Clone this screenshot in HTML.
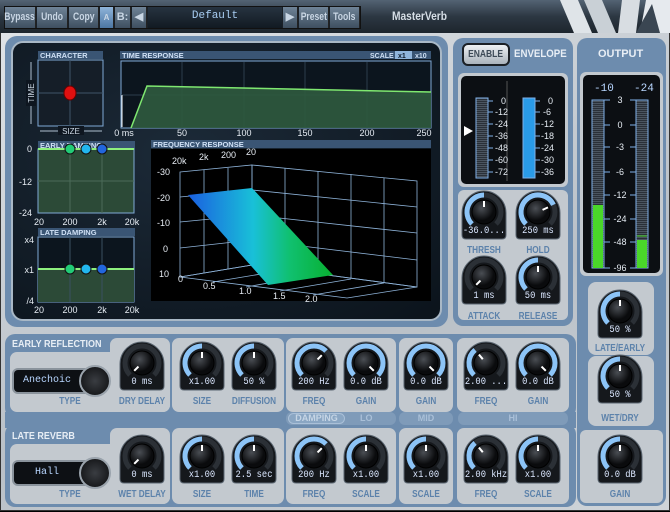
<!DOCTYPE html><html><head><meta charset="utf-8"><style>
*{margin:0;padding:0;box-sizing:border-box}
body{width:670px;height:512px;overflow:hidden;background:#000;font-family:"Liberation Sans",sans-serif;position:relative}
.a{position:absolute}
.lbl{position:absolute;font:bold 10px "Liberation Sans",sans-serif;color:#5c82ab;text-align:center;transform:translateX(-50%) scaleX(0.82);white-space:nowrap;letter-spacing:0}
.val{position:absolute;font:10px "Liberation Mono",monospace;color:#dbe7ff;text-align:center;transform:translateX(-50%) scaleX(0.88);white-space:nowrap}
.tb{position:absolute;top:7px;height:21px;background:linear-gradient(#6f8397,#3e4f60);color:#c9d6e4;font:bold 11px "Liberation Sans",sans-serif;line-height:21px;text-align:center;border-right:1px solid #222;white-space:nowrap}
.tb span{display:inline-block;transform:scaleX(0.78);margin:0 -6px}
</style></head><body>
<div class="a" style="left:0;top:32px;width:670px;height:479px;background:linear-gradient(160deg,#dfe3e7,#b9c0c7 60%,#cfd4d9);border:1px solid #333"></div>
<div class="a" style="left:0;top:0;width:670px;height:33px;background:linear-gradient(#536373,#2c3742 50%,#1d252d)"></div>
<div class="a" style="left:4px;top:6px;width:357px;height:23px;background:#1a2027;border:1px solid #111"></div>
<div class="tb" style="left:5px;width:31px"><span>Bypass</span></div>
<div class="tb" style="left:37px;width:31px"><span>Undo</span></div>
<div class="tb" style="left:69px;width:30px"><span>Copy</span></div>
<div class="tb" style="left:100px;width:14px;background:linear-gradient(#8fb4da,#4c76a2);font-size:8px">A</div>
<div class="tb" style="left:115px;width:16px">B:</div>
<div class="tb" style="left:132px;width:15px">◀</div>
<div class="a" style="left:148px;top:7px;width:134px;height:21px;background:linear-gradient(#273340,#121a22);color:#a8cdf2;font:11px 'Liberation Mono',monospace;text-align:center;line-height:19px">Default</div>
<div class="tb" style="left:283px;width:15px">▶</div>
<div class="tb" style="left:299px;width:30px"><span>Preset</span></div>
<div class="tb" style="left:330px;width:30px"><span>Tools</span></div>
<div class="a" style="left:392px;top:9px;color:#d6dee6;font:bold 12px 'Liberation Sans',sans-serif;transform:scaleX(0.85);transform-origin:left">MasterVerb</div>
<svg class="a" style="left:540px;top:0" width="130" height="33"><polygon points="20,0 38,0 52,33 34,33" fill="#dfe4e8"/><polygon points="44,0 62,0 76,33 58,33" fill="#c9d0d6"/><polygon points="82,0 100,0 96,33 78,33" fill="#d8dde2"/><polygon points="106,0 130,0 130,33 100,33" fill="#e6eaee"/><polygon points="96,33 112,4 120,33" fill="#3a4652"/></svg>

<div class="a" style="left:5px;top:36px;width:443px;height:291px;background:#6d8cae;border-radius:12px"></div>
<div class="a" style="left:11px;top:41px;width:431px;height:280px;background:radial-gradient(ellipse at 40% 40%,#1c2a38,#0b131b);border:2px solid #a9b8c6;border-radius:12px"></div>

<svg class="a" style="left:0;top:0" width="450" height="330" font-family="Liberation Sans,sans-serif">
<rect x="38" y="51" width="65" height="8" fill="#3a5574"/><text x="40" y="58" font-size="7.5" font-weight="bold" fill="#cfe0f5">CHARACTER</text>
<rect x="38" y="60" width="65" height="66" fill="#151e28" stroke="#7fa9d6"/>
<line x1="70" y1="60" x2="70" y2="126" stroke="#3e5468"/><line x1="38" y1="93" x2="103" y2="93" stroke="#3e5468"/>
<ellipse cx="70" cy="93" rx="6" ry="7" fill="#e01010" stroke="#600" />
<line x1="31" y1="62" x2="31" y2="124" stroke="#aebfd0"/><rect x="26" y="80" width="10" height="26" fill="#0e1620"/><text x="34" y="93" font-size="8" fill="#cdd9e5" transform="rotate(-90 34 93)" text-anchor="middle">TIME</text>
<line x1="40" y1="131" x2="102" y2="131" stroke="#aebfd0"/><rect x="58" y="126" width="26" height="9" fill="#0e1620"/><text x="71" y="134" font-size="8" fill="#cdd9e5" text-anchor="middle">SIZE</text>
<rect x="120" y="51" width="311" height="8" fill="#3a5574"/><text x="122" y="58" font-size="7.5" font-weight="bold" fill="#cfe0f5">TIME RESPONSE</text>
<text x="370" y="58" font-size="7" font-weight="bold" fill="#cfe0f5">SCALE</text><rect x="395" y="51" width="17" height="8" fill="#8fb4da"/><text x="398" y="58" font-size="7" font-weight="bold" fill="#0d1a2a">x1</text><text x="415" y="58" font-size="7" font-weight="bold" fill="#cfe0f5">x10</text>
<rect x="121" y="61" width="310" height="67" fill="#0c151e" stroke="#7fa9d6"/>
<g stroke="#2d3d4c"><line x1="182" y1="62" x2="182" y2="128"/><line x1="244" y1="62" x2="244" y2="128"/><line x1="305" y1="62" x2="305" y2="128"/><line x1="367" y1="62" x2="367" y2="128"/><line x1="121" y1="95" x2="431" y2="95"/></g>
<polygon points="131,128 147,86 431,92 431,128" fill="#2f5a3e" opacity="0.9"/>
<polyline points="131,128 147,86 431,92" fill="none" stroke="#7fe870" stroke-width="1.5"/>
<line x1="122" y1="95" x2="122" y2="127" stroke="#fff"/>
<g font-size="9" fill="#e6ecf3" text-anchor="middle"><text x="124" y="136">0 ms</text><text x="182" y="136">50</text><text x="244" y="136">100</text><text x="305" y="136">150</text><text x="367" y="136">200</text><text x="424" y="136">250</text></g>
<rect x="38" y="141" width="97" height="8" fill="#3a5574"/><text x="40" y="148" font-size="7.5" font-weight="bold" fill="#cfe0f5">EARLY DAMPING</text>
<rect x="38" y="149" width="96" height="64" fill="#2c4a37" stroke="#7fa9d6"/>
<g stroke="#4b6b58"><line x1="70" y1="149" x2="70" y2="213"/><line x1="102" y1="149" x2="102" y2="213"/><line x1="38" y1="181" x2="134" y2="181"/></g>
<line x1="38" y1="149" x2="134" y2="149" stroke="#8ef07e" stroke-width="2"/>
<circle cx="70" cy="149" r="5" fill="#22cc77" stroke="#111"/><circle cx="86" cy="149" r="5" fill="#22b6ee" stroke="#111"/><circle cx="102" cy="149" r="5" fill="#2266dd" stroke="#111"/>
<g font-size="9" fill="#e6ecf3" text-anchor="end"><text x="32" y="152">0</text><text x="32" y="185">-12</text><text x="32" y="216">-24</text></g>
<g font-size="9" fill="#e6ecf3" text-anchor="middle"><text x="39" y="225">20</text><text x="70" y="225">200</text><text x="102" y="225">2k</text><text x="132" y="225">20k</text></g>
<rect x="38" y="228" width="97" height="8" fill="#3a5574"/><text x="40" y="235" font-size="7.5" font-weight="bold" fill="#cfe0f5">LATE DAMPING</text>
<rect x="38" y="237" width="96" height="65" fill="#0c151e" stroke="#7fa9d6"/>
<rect x="38" y="269" width="96" height="33" fill="#2c4a37"/>
<g stroke="#3a5060"><line x1="70" y1="237" x2="70" y2="302"/><line x1="102" y1="237" x2="102" y2="302"/></g>
<line x1="38" y1="269" x2="134" y2="269" stroke="#8ef07e" stroke-width="2"/>
<circle cx="70" cy="269" r="5" fill="#22cc77" stroke="#111"/><circle cx="86" cy="269" r="5" fill="#22b6ee" stroke="#111"/><circle cx="102" cy="269" r="5" fill="#2266dd" stroke="#111"/>
<g font-size="9" fill="#e6ecf3" text-anchor="end"><text x="34" y="243">x4</text><text x="34" y="273">x1</text><text x="34" y="304">/4</text></g>
<g font-size="9" fill="#e6ecf3" text-anchor="middle"><text x="39" y="313">20</text><text x="70" y="313">200</text><text x="102" y="313">2k</text><text x="132" y="313">20k</text></g>
<rect x="151" y="140" width="280" height="8" fill="#3a5574"/><text x="153" y="147" font-size="7.5" font-weight="bold" fill="#cfe0f5">FREQUENCY RESPONSE</text>
<rect x="151" y="149" width="280" height="152" fill="#000"/>
<g stroke="#8fb4da" fill="none" stroke-width="0.8">
<polygon points="180,172 252,165 252,265 180,277"/>
<polygon points="252,165 417,181 417,287 252,265"/>
<polygon points="180,277 252,265 417,287 347,298"/>
<line x1="180" y1="197" x2="252" y2="190"/><line x1="180" y1="222" x2="252" y2="215"/><line x1="180" y1="248" x2="252" y2="240"/>
<line x1="252" y1="190" x2="417" y2="207"/><line x1="252" y1="215" x2="417" y2="233"/><line x1="252" y1="240" x2="417" y2="260"/>
<line x1="285" y1="168" x2="285" y2="269"/><line x1="318" y1="171" x2="318" y2="274"/><line x1="351" y1="174" x2="351" y2="278"/><line x1="384" y1="178" x2="384" y2="283"/>
<line x1="228" y1="168" x2="228" y2="269"/><line x1="204" y1="170" x2="204" y2="273"/>
<line x1="213" y1="282" x2="285" y2="270"/><line x1="246" y1="287" x2="318" y2="274"/><line x1="280" y1="291" x2="351" y2="279"/><line x1="313" y1="295" x2="384" y2="283"/>
</g>
<defs><linearGradient id="sg" x1="0" y1="0" x2="1" y2="0"><stop offset="0" stop-color="#1a5fe0"/><stop offset="0.45" stop-color="#19c0d8"/><stop offset="0.7" stop-color="#10c070"/><stop offset="1" stop-color="#08b030"/></linearGradient></defs>
<polygon points="188,195 252,188 333,275 268,285" fill="url(#sg)"/>
<g font-size="9" fill="#e6ecf3"><text x="172" y="164">20k</text><text x="199" y="160">2k</text><text x="221" y="158">200</text><text x="246" y="155">20</text>
<text x="157" y="175">-30</text><text x="157" y="201">-20</text><text x="157" y="226">-10</text><text x="163" y="252">0</text><text x="159" y="277">10</text>
<text x="178" y="282">0</text><text x="203" y="289">0.5</text><text x="239" y="294">1.0</text><text x="273" y="299">1.5</text><text x="305" y="302">2.0</text></g>
</svg>

<div class="a" style="left:453px;top:38px;width:120px;height:288px;background:#6d8cae;border-radius:10px"></div>
<div class="a" style="left:458px;top:190px;width:110px;height:130px;background:#c3c9cf;border-radius:6px"></div>
<div class="a" style="left:462px;top:43px;width:48px;height:23px;background:linear-gradient(#eef1f4,#aab3bc);border:2px solid #1b2026;border-radius:6px;font:bold 10px 'Liberation Sans';color:#3d4a57;text-align:center;line-height:19px"><span style="display:inline-block;transform:scaleX(0.85)">ENABLE</span></div>
<div class="a" style="left:514px;top:48px;font:bold 11px 'Liberation Sans';color:#e8eef5;transform:scaleX(0.88);transform-origin:left">ENVELOPE</div>
<div class="a" style="left:458px;top:73px;width:110px;height:114px;background:#c3c9cf;border-radius:6px"></div>
<div class="a" style="left:461px;top:76px;width:104px;height:108px;background:#0c0f13;border-radius:5px"></div>
<svg class="a" style="left:461px;top:76px" width="104" height="108" font-family="Liberation Sans" font-size="9" fill="#e6ecf3">
<defs><pattern id="hs" width="4" height="2" patternUnits="userSpaceOnUse"><rect width="4" height="1" fill="#4b5560"/><rect y="1" width="4" height="1" fill="#2a3038"/></pattern></defs>
<rect x="15" y="22" width="12" height="80" fill="url(#hs)" stroke="#7fb0e8"/>
<rect x="62" y="22" width="12" height="80" fill="#2a9be8" stroke="#7fb0e8"/>
<line x1="46" y1="5" x2="46" y2="105" stroke="#555"/>
<polygon points="3,50 12,55 3,60" fill="#fff"/>
<g stroke="#7fb0e8"><line x1="27" y1="25" x2="32" y2="25"/><line x1="27" y1="36" x2="32" y2="36"/><line x1="27" y1="48" x2="32" y2="48"/><line x1="27" y1="60" x2="32" y2="60"/><line x1="27" y1="72" x2="32" y2="72"/><line x1="27" y1="84" x2="32" y2="84"/><line x1="27" y1="96" x2="32" y2="96"/>
<line x1="74" y1="25" x2="79" y2="25"/><line x1="74" y1="36" x2="79" y2="36"/><line x1="74" y1="48" x2="79" y2="48"/><line x1="74" y1="60" x2="79" y2="60"/><line x1="74" y1="72" x2="79" y2="72"/><line x1="74" y1="84" x2="79" y2="84"/><line x1="74" y1="96" x2="79" y2="96"/></g>
<text x="40" y="28">0</text><text x="34" y="39">-12</text><text x="34" y="51">-24</text><text x="34" y="63">-36</text><text x="34" y="75">-48</text><text x="34" y="87">-60</text><text x="34" y="99">-72</text>
<text x="87" y="28">0</text><text x="82" y="39">-6</text><text x="80" y="51">-12</text><text x="80" y="63">-18</text><text x="80" y="75">-24</text><text x="80" y="87">-30</text><text x="80" y="99">-36</text>
</svg>

<div class="a" style="left:577px;top:38px;width:89px;height:468px;background:#6d8cae;border-radius:10px"></div>
<div class="a" style="left:580px;top:430px;width:83px;height:73px;background:#c3c9cf;border-radius:6px"></div>
<div class="a" style="left:588px;top:282px;width:66px;height:73px;background:#c3c9cf;border-radius:8px"></div>
<div class="a" style="left:588px;top:356px;width:66px;height:70px;background:#c3c9cf;border-radius:8px"></div>
<div class="a" style="left:598px;top:48px;font:bold 11px 'Liberation Sans';color:#e8eef5">OUTPUT</div>
<div class="a" style="left:580px;top:72px;width:83px;height:204px;background:#c3c9cf;border-radius:6px"></div>
<div class="a" style="left:583px;top:75px;width:77px;height:198px;background:#0c0f13;border-radius:5px"></div>
<svg class="a" style="left:583px;top:75px" width="77" height="198" font-family="Liberation Sans" font-size="9" fill="#e6ecf3">
<text x="11" y="16" font-family="Liberation Mono" font-size="11" fill="#b8d6ff">-10</text><text x="51" y="16" font-family="Liberation Mono" font-size="11" fill="#b8d6ff">-24</text>
<rect x="9" y="25" width="12" height="168" fill="url(#hs)" stroke="#7fb0e8"/><rect x="10" y="130" width="10" height="63" fill="#4ad62a"/>
<rect x="53" y="25" width="12" height="168" fill="url(#hs)" stroke="#7fb0e8"/><rect x="54" y="165" width="10" height="28" fill="#4ad62a"/><line x1="54" y1="161" x2="64" y2="161" stroke="#4ad62a"/>
<g stroke="#7fb0e8"><line x1="21" y1="25" x2="27" y2="25"/><line x1="47" y1="25" x2="53" y2="25"/><line x1="21" y1="50" x2="27" y2="50"/><line x1="47" y1="50" x2="53" y2="50"/><line x1="21" y1="72" x2="27" y2="72"/><line x1="47" y1="72" x2="53" y2="72"/><line x1="21" y1="97" x2="27" y2="97"/><line x1="47" y1="97" x2="53" y2="97"/><line x1="21" y1="120" x2="27" y2="120"/><line x1="47" y1="120" x2="53" y2="120"/><line x1="21" y1="144" x2="27" y2="144"/><line x1="47" y1="144" x2="53" y2="144"/><line x1="21" y1="167" x2="27" y2="167"/><line x1="47" y1="167" x2="53" y2="167"/><line x1="21" y1="193" x2="27" y2="193"/><line x1="47" y1="193" x2="53" y2="193"/></g>
<g text-anchor="middle"><text x="37" y="28">3</text><text x="37" y="53">0</text><text x="37" y="75">-3</text><text x="37" y="100">-6</text><text x="37" y="123">-12</text><text x="37" y="147">-24</text><text x="37" y="170">-48</text><text x="37" y="196">-96</text></g>
</svg>

<div class="a" style="left:5px;top:334px;width:571px;height:84px;background:#6d8cae;border-radius:10px"></div>
<div class="a" style="left:5px;top:424px;width:571px;height:83px;background:#6d8cae;border-radius:10px"></div>
<div class="a" style="left:5px;top:412px;width:571px;height:16px;background:#6d8cae"></div>
<div id="grp"></div>
<div class="a" style="left:12px;top:339px;font:bold 10px 'Liberation Sans';color:#e8eef5;transform:scaleX(0.9);transform-origin:left">EARLY REFLECTION</div>
<div class="a" style="left:12px;top:431px;font:bold 10px 'Liberation Sans';color:#e8eef5;transform:scaleX(0.9);transform-origin:left">LATE REVERB</div>
<div class="a" style="left:286px;top:412px;width:110px;height:13px;background:#7f9bb9;border-radius:6px"></div>
<div class="a" style="left:288px;top:413px;width:57px;height:11px;border:1px solid #aac0d8;border-radius:6px;background:#8aa6c3;font:bold 9px 'Liberation Sans';color:#c6d5e5;text-align:center;line-height:9px">DAMPING</div>
<div class="a" style="left:360px;top:413px;font:bold 9px 'Liberation Sans';color:#aac0d8">LO</div>
<div class="a" style="left:399px;top:412px;width:54px;height:13px;background:#7f9bb9;border-radius:6px;font:bold 9px 'Liberation Sans';color:#aac0d8;text-align:center;line-height:13px">MID</div>
<div class="a" style="left:458px;top:412px;width:110px;height:13px;background:#7f9bb9;border-radius:6px;font:bold 9px 'Liberation Sans';color:#aac0d8;text-align:center;line-height:13px">HI</div>
<div class="a" style="left:14px;top:370px;width:76px;height:22px;background:#0d1014;border-radius:4px;box-shadow:0 0 0 2px #8a939c;font:10px 'Liberation Mono';color:#b8d6ff;line-height:22px;padding-left:9px">Anechoic</div>
<div class="a" style="left:14px;top:462px;width:76px;height:22px;background:#0d1014;border-radius:4px;box-shadow:0 0 0 2px #8a939c;font:10px 'Liberation Mono';color:#b8d6ff;line-height:22px;padding-left:21px">Hall</div>
<div class="a" style="left:79px;top:365px;width:32px;height:32px;border-radius:50%;background:radial-gradient(#3a3d42,#0b0c0e);border:2px solid #9aa3ac"></div>
<div class="a" style="left:79px;top:457px;width:32px;height:32px;border-radius:50%;background:radial-gradient(#3a3d42,#0b0c0e);border:2px solid #9aa3ac"></div>
<div class="lbl" style="left:70px;top:396px">TYPE</div><div class="lbl" style="left:70px;top:489px">TYPE</div>
<div id="k"></div>
<script>
var g=[[10,352,160,60],[110,338,60,74],[172,338,112,74],[286,338,110,74],[399,338,54,74],[457,338,112,74],
[10,444,160,60],[110,428,60,76],[172,428,112,76],[286,428,110,76],[399,428,54,76],[457,428,112,76]];
var h='';g.forEach(function(r){h+='<div class="a" style="left:'+r[0]+'px;top:'+r[1]+'px;width:'+r[2]+'px;height:'+r[3]+'px;background:#c3c9cf;border-radius:7px"></div>'});
document.getElementById('grp').innerHTML=h;
function P(cx,cy,r,a){a=(a-90)*Math.PI/180;return [cx+r*Math.cos(a),cy+r*Math.sin(a)]}
function K(cx,cy,v,val,lab,ly){
 var s='<svg class="a" style="left:'+(cx-24)+'px;top:'+(cy-23)+'px" width="48" height="52">';
 s+='<path d="M2 24 A22 22 0 0 1 46 24 L46 46 Q46 50 42 50 L6 50 Q2 50 2 46Z" fill="#15181c" stroke="#5a6570" stroke-width="1"/>';
 var a0=P(24,23,17,-135),a1=P(24,23,17,135);
 s+='<path d="M'+a0+' A17 17 0 1 1 '+a1+'" fill="none" stroke="#2b3036" stroke-width="5"/>';
 if(v>-135){var e=P(24,23,17,v);s+='<path d="M'+a0+' A17 17 0 '+(v>45?1:0)+' 1 '+e+'" fill="none" stroke="#8cc4f7" stroke-width="5"/>';}
 s+='<defs><radialGradient id="kg" cx="0.4" cy="0.35"><stop offset="0" stop-color="#4a4e54"/><stop offset="1" stop-color="#0a0b0d"/></radialGradient></defs>';
 s+='<circle cx="24" cy="23" r="12" fill="url(#kg)" stroke="#000"/>';
 var p1=P(24,23,5,v),p2=P(24,23,11,v);
 s+='<line x1="'+p1[0]+'" y1="'+p1[1]+'" x2="'+p2[0]+'" y2="'+p2[1]+'" stroke="#fff" stroke-width="2"/></svg>';
 s+='<div class="val" style="left:'+cx+'px;top:'+(cy+14)+'px">'+val+'</div>';
 s+='<div class="lbl" style="left:'+cx+'px;top:'+(ly||cy+33)+'px">'+lab+'</div>';
 return s}
var k='';
var er=363,lr=456;
k+=K(142,er,-135,'0 ms','DRY DELAY')+K(202,er,0,'x1.00','SIZE')+K(254,er,0,'50 %','DIFFUSION')+K(314,er,45,'200 Hz','FREQ')+K(366,er,135,'0.0 dB','GAIN')+K(426,er,135,'0.0 dB','GAIN')+K(486,er,-40,'2.00 ...','FREQ')+K(538,er,135,'0.0 dB','GAIN');
k+=K(142,lr,-135,'0 ms','WET DELAY')+K(202,lr,0,'x1.00','SIZE')+K(254,lr,0,'2.5 sec','TIME')+K(314,lr,45,'200 Hz','FREQ')+K(366,lr,0,'x1.00','SCALE')+K(426,lr,0,'x1.00','SCALE')+K(486,lr,-40,'2.00 kHz','FREQ')+K(538,lr,0,'x1.00','SCALE');
k+=K(484,212,0,'-36.0...','THRESH')+K(538,212,65,'250 ms','HOLD')+K(484,277,-135,'1 ms','ATTACK',311)+K(538,277,0,'50 ms','RELEASE',311);
k+=K(620,311,0,'50 %','LATE/EARLY',343)+K(620,376,0,'50 %','WET/DRY',413)+K(620,456,0,'0.0 dB','GAIN',489);
document.getElementById('k').innerHTML=k;
</script>
</body></html>
